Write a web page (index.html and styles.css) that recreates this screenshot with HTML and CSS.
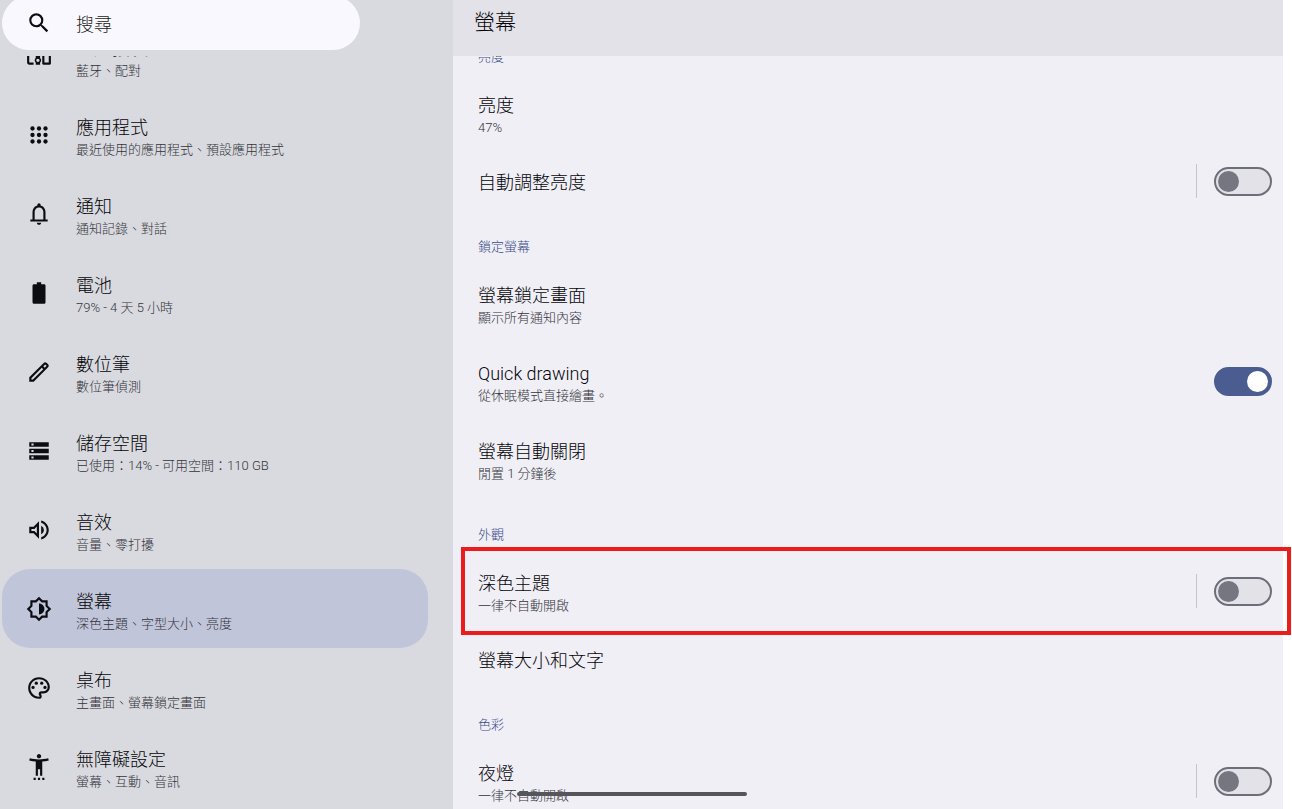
FILE: index.html
```html
<!DOCTYPE html>
<html lang="zh-Hant">
<head>
    <meta charset="UTF-8">
    <meta name="viewport" content="width=device-width, initial-scale=1.0">
    <title>螢幕</title>
    <link rel="stylesheet" href="styles.css">
</head>
<body>
    <div class="app">
        <aside class="sidebar">
            <form class="search" role="search">
                <svg class="icon" viewBox="0 0 24 24"><path d="M15.5 14h-.79l-.28-.27A6.47 6.47 0 0 0 16 9.5 6.5 6.5 0 1 0 9.5 16c1.61 0 3.09-.59 4.23-1.57l.27.28v.79l5 4.99L20.49 19l-4.99-5zm-6 0C7.01 14 5 11.99 5 9.5S7.01 5 9.5 5 14 7.01 14 9.5 11.99 14 9.5 14z"/></svg>
                <input class="search-input" type="search" placeholder="搜尋" aria-label="搜尋">
            </form>

            <nav class="nav">
                <div class="nav-list">
                    <a href="#" class="nav-item">
                        <svg class="icon" viewBox="0 0 24 24"><path d="M3 6h18V4H3c-1.1 0-2 .9-2 2v12c0 1.1.9 2 2 2h4v-2H3V6zm10 6H9v1.78c-.61.55-1 1.33-1 2.22s.39 1.67 1 2.22V20h4v-1.78c.61-.55 1-1.34 1-2.22s-.39-1.67-1-2.22V12zm-2 5.5c-.83 0-1.5-.67-1.5-1.5s.67-1.5 1.5-1.5 1.5.67 1.5 1.5-.67 1.5-1.5 1.5zM22 8h-6c-.5 0-1 .5-1 1v10c0 .5.5 1 1 1h6c.5 0 1-.5 1-1V9c0-.5-.5-1-1-1zm-1 10h-4v-8h4v8z"/></svg>
                        <span class="text">
                            <span class="title">已連接裝置</span>
                            <span class="summary">藍牙、配對</span>
                        </span>
                    </a>
                    <a href="#" class="nav-item">
                        <svg class="icon" viewBox="0 0 24 24"><circle cx="6" cy="6" r="2"/><circle cx="12" cy="6" r="2"/><circle cx="18" cy="6" r="2"/><circle cx="6" cy="12" r="2"/><circle cx="12" cy="12" r="2"/><circle cx="18" cy="12" r="2"/><circle cx="6" cy="18" r="2"/><circle cx="12" cy="18" r="2"/><circle cx="18" cy="18" r="2"/></svg>
                        <span class="text">
                            <span class="title">應用程式</span>
                            <span class="summary">最近使用的應用程式、預設應用程式</span>
                        </span>
                    </a>
                    <a href="#" class="nav-item">
                        <svg class="icon" viewBox="0 0 24 24"><path d="M4 19v-2h2v-7c0-2.8 1.9-5.1 4.5-5.8V3.5a1.5 1.5 0 0 1 3 0v.7C16.1 4.9 18 7.2 18 10v7h2v2H4zm8 3c-1.1 0-2-.9-2-2h4c0 1.1-.9 2-2 2zm-4-5h8v-7c0-2.2-1.8-4-4-4s-4 1.8-4 4v7z"/></svg>
                        <span class="text">
                            <span class="title">通知</span>
                            <span class="summary">通知記錄、對話</span>
                        </span>
                    </a>
                    <a href="#" class="nav-item">
                        <svg class="icon" viewBox="0 0 24 24"><path d="M16.7 4H14V2h-4v2H7.3C6.6 4 6 4.6 6 5.3v15.3c0 .8.6 1.4 1.3 1.4h9.3c.8 0 1.4-.6 1.4-1.3V5.3C18 4.6 17.4 4 16.7 4z"/></svg>
                        <span class="text">
                            <span class="title">電池</span>
                            <span class="summary">79% - 4 天 5 小時</span>
                        </span>
                    </a>
                    <a href="#" class="nav-item">
                        <svg class="icon" viewBox="0 0 24 24"><path d="M20.4 4.9 19.1 3.6c-.8-.8-2-.8-2.8 0L3 16.9V21h4.1L20.4 7.7c.8-.8.8-2 0-2.8zM6.3 19H5v-1.3l9.6-9.6 1.3 1.3L6.3 19zm11-11L16 6.700l1.700-1.700L19 6.300 17.300 8z"/></svg>
                        <span class="text">
                            <span class="title">數位筆</span>
                            <span class="summary">數位筆偵測</span>
                        </span>
                    </a>
                    <a href="#" class="nav-item">
                        <svg class="icon" viewBox="0 0 24 24"><path d="M3 20h18v-4H3v4zm2-3h2v2H5v-2zM3 4v4h18V4H3zm4 3H5V5h2v2zm-4 7h18v-4H3v4zm2-3h2v2H5v-2z"/></svg>
                        <span class="text">
                            <span class="title">儲存空間</span>
                            <span class="summary">已使用：14% - 可用空間：110 GB</span>
                        </span>
                    </a>
                    <a href="#" class="nav-item">
                        <svg class="icon" viewBox="0 0 24 24"><path d="M3 9v6h4l5 5V4L7 9H3zm7-.17v6.34L7.83 13H5v-2h2.83L10 8.83zM16.5 12A4.5 4.5 0 0 0 14 7.97v8.05c1.48-.73 2.5-2.25 2.5-4.02zM14 3.23v2.06c2.89.86 5 3.54 5 6.71s-2.11 5.85-5 6.71v2.06c4.01-.91 7-4.49 7-8.77s-2.99-7.86-7-8.77z"/></svg>
                        <span class="text">
                            <span class="title">音效</span>
                            <span class="summary">音量、零打擾</span>
                        </span>
                    </a>
                    <a href="#" class="nav-item active" aria-current="page">
                        <svg class="icon" viewBox="0 0 24 24"><path d="M20 8.69V4h-4.69L12 .69 8.69 4H4v4.69L.69 12 4 15.31V20h4.69L12 23.31 15.31 20H20v-4.69L23.31 12 20 8.69zm-2 5.79V18h-3.52L12 20.48 9.52 18H6v-3.52L3.52 12 6 9.52V6h3.52L12 3.52 14.48 6H18v3.52L20.48 12 18 14.48zM12 7v10c2.76 0 5-2.24 5-5s-2.24-5-5-5z"/></svg>
                        <span class="text">
                            <span class="title">螢幕</span>
                            <span class="summary">深色主題、字型大小、亮度</span>
                        </span>
                    </a>
                    <a href="#" class="nav-item">
                        <svg class="icon" viewBox="0 0 24 24"><path d="M12 22C6.49 22 2 17.51 2 12S6.49 2 12 2s10 4.04 10 9c0 3.31-2.69 6-6 6h-1.77c-.28 0-.5.22-.5.5 0 .12.05.23.13.33.41.47.64 1.06.64 1.67A2.5 2.5 0 0 1 12 22zm0-18c-4.41 0-8 3.59-8 8s3.59 8 8 8c.28 0 .5-.22.5-.5a.54.54 0 0 0-.14-.35c-.41-.46-.63-1.05-.63-1.65a2.5 2.5 0 0 1 2.5-2.5H16c2.21 0 4-1.79 4-4 0-3.86-3.59-7-8-7z"/><circle cx="6.5" cy="11.5" r="1.5"/><circle cx="9.5" cy="7.5" r="1.5"/><circle cx="14.5" cy="7.5" r="1.5"/><circle cx="17.5" cy="11.5" r="1.5"/></svg>
                        <span class="text">
                            <span class="title">桌布</span>
                            <span class="summary">主畫面、螢幕鎖定畫面</span>
                        </span>
                    </a>
                    <a href="#" class="nav-item">
                        <svg class="icon" viewBox="0 0 24 24"><path d="M20.5 4c-2.61.7-5.67 1-8.5 1s-5.89-.3-8.5-1L3 6c1.86.5 4 .83 6 1v13h2v-6h2v6h2V7c2-.17 4.14-.5 6-1l-.5-2zM12 4c1.1 0 2-.9 2-2s-.9-2-2-2-2 .9-2 2 .9 2 2 2zM7 24h2v-2H7v2zm4 0h2v-2h-2v2zm4 0h2v-2h-2v2z"/></svg>
                        <span class="text">
                            <span class="title">無障礙設定</span>
                            <span class="summary">螢幕、互動、音訊</span>
                        </span>
                    </a>
                </div>
            </nav>
        </aside>

        <main class="content">
            <header class="content-header">
                <h1 class="page-title">螢幕</h1>
            </header>

            <div class="settings">
                <h2 class="section-label">亮度</h2>
                <div class="row">
                    <div class="text">
                        <span class="title">亮度</span>
                        <span class="summary">47%</span>
                    </div>
                </div>
                <div class="row row-single">
                    <label class="text" for="auto-brightness">
                        <span class="title">自動調整亮度</span>
                    </label>
                    <div class="control divided">
                        <input class="switch" type="checkbox" role="switch" id="auto-brightness">
                    </div>
                </div>

                <h2 class="section-label">鎖定螢幕</h2>
                <div class="row">
                    <div class="text">
                        <span class="title">螢幕鎖定畫面</span>
                        <span class="summary">顯示所有通知內容</span>
                    </div>
                </div>
                <div class="row">
                    <label class="text" for="quick-drawing">
                        <span class="title">Quick drawing</span>
                        <span class="summary">從休眠模式直接繪畫。</span>
                    </label>
                    <div class="control">
                        <input class="switch" type="checkbox" role="switch" id="quick-drawing" checked>
                    </div>
                </div>
                <div class="row">
                    <div class="text">
                        <span class="title">螢幕自動關閉</span>
                        <span class="summary">閒置 1 分鐘後</span>
                    </div>
                </div>

                <h2 class="section-label">外觀</h2>
                <div class="row highlight">
                    <label class="text" for="dark-theme">
                        <span class="title">深色主題</span>
                        <span class="summary">一律不自動開啟</span>
                    </label>
                    <div class="control divided">
                        <input class="switch" type="checkbox" role="switch" id="dark-theme">
                    </div>
                </div>
                <div class="row row-single">
                    <div class="text">
                        <span class="title">螢幕大小和文字</span>
                    </div>
                </div>

                <h2 class="section-label">色彩</h2>
                <div class="row">
                    <label class="text" for="night-light">
                        <span class="title">夜燈</span>
                        <span class="summary">一律不自動開啟</span>
                    </label>
                    <div class="control divided">
                        <input class="switch" type="checkbox" role="switch" id="night-light">
                    </div>
                </div>
            </div>
        </main>
    </div>

    <div class="gesture-bar"></div>
</body>
</html>
```
FILE: styles.css
```css
* {
    margin: 0;
    padding: 0;
    box-sizing: border-box;
}

body {
    font-family: Roboto, 'Noto Sans CJK TC', sans-serif;
    font-weight: 300;
    background: #fff;
    color: #050509;
    height: 100vh;
    overflow: hidden;
}

.app {
    display: flex;
    height: 100%;
    margin-right: 9px;
}

/* Sidebar */
.sidebar {
    flex: 0 0 453px;
    display: flex;
    flex-direction: column;
    gap: 6px;
    background: #d9dadf;
}

.search {
    display: flex;
    align-items: center;
    gap: 24px;
    height: 54px;
    margin: -4px 93px 0 2px;
    padding: 0 24px;
    background: #f9f8ff;
    border-radius: 27px;
}

.search-input {
    flex: 1;
    min-width: 0;
    padding-top: 2px;
    border: none;
    outline: none;
    background: transparent;
    font: inherit;
    font-size: 18px;
    color: #050509;
}

.search-input::placeholder {
    color: #1c1d22;
}

.icon {
    flex: none;
    width: 26px;
    height: 26px;
    fill: #0c0d12;
}

.nav {
    flex: 1;
    min-height: 0;
    overflow: hidden;
}

/* list is scrolled down by half an item */
.nav-list {
    margin-top: -40px;
}

.nav-item {
    display: flex;
    align-items: center;
    gap: 24px;
    height: 79px;
    margin: 0 25px 0 2px;
    padding: 0 24px;
    border-radius: 28px;
    color: inherit;
    text-decoration: none;
}

.nav-item.active {
    background: #c1c5da;
}

.text {
    display: flex;
    flex-direction: column;
    padding-top: 2px;
}

.nav-item .text {
    padding-top: 4px;
}

.title {
    font-size: 18px;
    line-height: 26px;
}

.summary {
    font-size: 13px;
    line-height: 18px;
    color: #33343a;
}

/* Content */
.content {
    flex: 1;
    min-width: 0;
    background: #f0eff6;
}

.content-header {
    position: relative;
    z-index: 1;
    height: 56px;
    padding: 8px 21px;
    background: #e2e2e8;
}

.page-title {
    font-size: 21px;
    line-height: 28px;
    font-weight: 300;
}

.settings {
    margin-top: -35px;
}

.section-label {
    padding: 27px 25px 9px;
    font-size: 13px;
    line-height: 18px;
    font-weight: 300;
    color: #3a4c88;
}

.row {
    display: flex;
    align-items: center;
    justify-content: space-between;
    height: 78px;
    padding: 0 11px 0 25px;
}

.row-single {
    height: 58px;
}

.highlight {
    position: relative;
}

.highlight::after {
    content: '';
    position: absolute;
    inset: -6px -8px -4px 8px;
    border: 4px solid #ec1c1c;
    pointer-events: none;
}

.control {
    display: flex;
    align-items: center;
    height: 34px;
    margin-bottom: 2px;
}

.divided {
    padding-left: 17px;
    border-left: 1px solid #c4c5cc;
}

.switch {
    appearance: none;
    display: flex;
    align-items: center;
    width: 58px;
    height: 29px;
    padding: 0 2px;
    border: 2px solid #6d6e78;
    border-radius: 15px;
    background: #e2e2e8;
    cursor: pointer;
}

.switch::before {
    content: '';
    width: 21px;
    height: 21px;
    border-radius: 50%;
    background: #757680;
}

.switch:checked {
    justify-content: flex-end;
    background: #4b5d90;
    border-color: #4b5d90;
}

.switch:checked::before {
    background: #fff;
}

/* Gesture bar */
.gesture-bar {
    position: absolute;
    left: 40%;
    bottom: 13px;
    width: 230px;
    height: 4px;
    border-radius: 2px;
    background: #55555a;
}
```
